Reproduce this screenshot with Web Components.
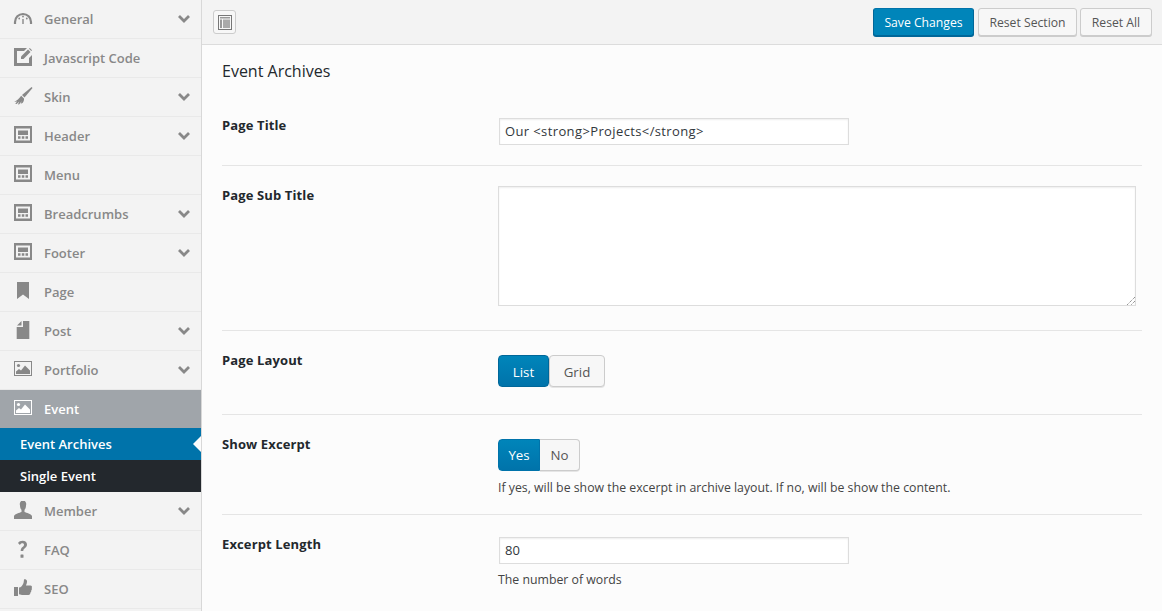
<!DOCTYPE html>
<html>
<head>
<meta charset="utf-8">
<title>Theme Options</title>
<style>
html, body { margin: 0; padding: 0; height: 100%; overflow: hidden; }
body { font-family: "Open Sans", sans-serif; font-size: 13px; color: #32373c; background: #fcfcfc; }
</style>
</head>
<body>
<options-panel>
  <side-menu slot="side">
    <menu-item icon="gauge" arrow>General</menu-item>
    <menu-item icon="edit">Javascript Code</menu-item>
    <menu-item icon="brush" arrow>Skin</menu-item>
    <menu-item icon="layout" arrow>Header</menu-item>
    <menu-item icon="layout">Menu</menu-item>
    <menu-item icon="layout" arrow>Breadcrumbs</menu-item>
    <menu-item icon="layout" arrow>Footer</menu-item>
    <menu-item icon="bookmark">Page</menu-item>
    <menu-item icon="post" arrow>Post</menu-item>
    <menu-item icon="image" arrow>Portfolio</menu-item>
    <menu-item icon="image" open>Event</menu-item>
    <sub-item active>Event Archives</sub-item>
    <sub-item>Single Event</sub-item>
    <menu-item icon="user" arrow>Member</menu-item>
    <menu-item icon="help">FAQ</menu-item>
    <menu-item icon="thumb">SEO</menu-item>
  </side-menu>
  <top-bar slot="top"></top-bar>
  <h2 slot="title" style="margin:0;font-size:16px;font-weight:400;line-height:22px;color:#23282d">Event Archives</h2>
  <option-row label="Page Title" top="22" bottom="20">
    <input-box value="Our &lt;strong&gt;Projects&lt;/strong&gt;" spaced></input-box>
  </option-row>
  <option-row label="Page Sub Title" top="20" bottom="24">
    <text-box></text-box>
  </option-row>
  <option-row label="Page Layout" top="24" bottom="27">
    <btn-set first="List" second="Grid"></btn-set>
  </option-row>
  <option-row label="Show Excerpt" top="24" bottom="17" desc="If yes, will be show the excerpt in archive layout. If no, will be show the content.">
    <btn-set first="Yes" second="No" joined></btn-set>
  </option-row>
  <option-row label="Excerpt Length" top="22" bottom="18" desc="The number of words" last>
    <input-box value="80"></input-box>
  </option-row>
</options-panel>

<script>
const ICONS = {
  gauge: '<path d="M2 15v-2a8 8 0 0 1 16 0v2" fill="none" stroke="currentColor" stroke-width="2.200"/><circle cx="10" cy="7.500" r=".9"/><circle cx="6.200" cy="9.500" r=".9"/><circle cx="13.800" cy="9.500" r=".9"/><rect x="9.300" y="10" width="1.400" height="5"/>',
  edit: '<path d="M1 0h13l-3 3H4v12h12v-5l3-3v11H1z"/><path d="M8 8.500 15 1.500 17.500 4 10.500 11H8z"/><path d="M16 .7 16.800 0 19 2.200 18.300 3z"/>',
  brush: '<path d="M18.600 0 19.500 .9 11.500 10.500 9 8z"/><path d="M8.200 8.700 11 11.500c.2 1.800-.3 3-1.500 4.500l-1.800.8.900-2.600-2.300 3.100-1.400.2 1.300-2.900-2.500 2.500-1.500-.3 2-2.400-3 .6C4 13.500 6 11.500 8.200 8.700z"/>',
  layout: '<path fill-rule="evenodd" d="M1 0h18v17H1zM3 2.500v12h14v-12z"/><path d="M5 4.500h10v4.500H5z"/><path d="M5 10.300h2.500v2.500H5zM8.800 10.300h2.500v2.500H8.800zM12.500 10.300H15v2.500h-2.500z"/>',
  bookmark: '<path d="M4 0h12v17l-6-4.500L4 17z"/>',
  post: '<path d="M10 0h6.300v18H3.700V6H10z"/><path d="M8.500 0v4.500H4z"/>',
  image: '<path fill-rule="evenodd" d="M1 1h18v15H1zM2 2v13h16V2z"/><circle cx="5.500" cy="5.500" r="1.600"/><path d="M3 14v-2.500l3-2.500 2 1.500 4-5 5 5V14z"/>',
  user: '<path d="M7 4.500a3.200 3.800 0 1 1 6 0c0 2-.8 3.500-1.500 4.500v2c2 1 6.500 1.800 7.500 4v3H1v-3c1-2.200 5.500-3 7.500-4V9C7.800 8 7 6.500 7 4.500z"/>',
  help: '<path d="M5 3C6 1.500 7.500.7 9.500.7c2.800 0 4.500 1.600 4.500 3.800 0 1.900-1 2.800-2.200 3.700-1.200.9-1.500 1.500-1.500 2.800H7.700c0-2 .5-3 1.800-4 1-.8 1.500-1.300 1.500-2.200 0-.9-.6-1.500-1.600-1.500-1.100 0-1.800.6-2.500 1.800z"/><rect x="7.500" y="14.500" width="3" height="3.200" rx=".5"/>',
  thumb: '<path d="M1 8h4v9H1z"/><path d="M6 8.500c2 0 3.500-2 4.500-4.500.4-1.200.3-2.500.5-3.500.2-.7 2.800-.5 3 1.500.2 1.600-.6 3.300-1 4.500h4.500c1.500 0 1.700 1.600 1.200 2.500.4 1 .2 1.800-.5 2.400.2 1-.1 1.700-.8 2.200.1 1.200-.6 2.400-1.900 2.400H10c-1.500 0-2.500-.8-4-.8z"/>'
};

const chevron = '<svg width="12" height="8" viewBox="0 0 12 8"><path d="M1 1 6 6l5-5" fill="none" stroke="currentColor" stroke-width="2.800"/></svg>';

class MenuItem extends HTMLElement {
  constructor() {
    super();
    const open = this.hasAttribute('open');
    const arrow = this.hasAttribute('arrow') ? chevron : '';
    this.attachShadow({ mode: 'open' });
    this.shadowRoot.innerHTML = `
    <style>
      :host { display: flex; align-items: center; box-sizing: border-box; height: ${open ? 38 : 39}px; padding: 0 11px 0 13px;
        border-bottom: ${open ? 0 : 1}px solid #e9e9e9; background: ${open ? '#a0a5aa' : '#f3f3f3'};
        color: ${open ? '#fff' : '#888'}; font-weight: 600; font-size: 13px; }
      svg.ic { width: 20px; height: 20px; fill: currentColor; flex: none; margin-right: 11px; }
      .label { flex: 1; }
    </style>
    <svg class="ic" viewBox="0 0 20 20">${ICONS[this.getAttribute('icon')]}</svg>
    <span class="label"><slot></slot></span>${arrow}`;
  }
}
customElements.define('menu-item', MenuItem);

class SubItem extends HTMLElement {
  constructor() {
    super();
    const active = this.hasAttribute('active');
    this.attachShadow({ mode: 'open' });
    this.shadowRoot.innerHTML = `
    <style>
      :host { display: flex; align-items: center; position: relative; height: 32px; padding-left: 20px;
        background: ${active ? '#0073aa' : '#23282d'}; color: #fff; font-weight: 600; font-size: 13px; }
      .notch { position: absolute; right: 0; top: 8px; border: 8px solid transparent; border-right-color: #fcfcfc; border-left-width: 0; }
    </style>
    <slot></slot>${active ? '<span class="notch"></span>' : ''}`;
  }
}
customElements.define('sub-item', SubItem);

class SideMenu extends HTMLElement {
  constructor() {
    super();
    this.attachShadow({ mode: 'open' });
    this.shadowRoot.innerHTML = `
    <style>
      :host { display: block; width: 201px; height: 100%; background: #f3f3f3; }
    </style>
    <slot></slot>`;
  }
}
customElements.define('side-menu', SideMenu);

class TopBar extends HTMLElement {
  constructor() {
    super();
    this.attachShadow({ mode: 'open' });
    this.shadowRoot.innerHTML = `
    <style>
      :host { display: flex; align-items: center; box-sizing: border-box; height: 45px; padding: 0 10px 0 11px; gap: 3px;
        background: #f3f3f3; border-bottom: 1px solid #dcdcdc; }
      .toggle { box-sizing: border-box; width: 23px; height: 24px; border: 1px solid #ccc; border-radius: 3px; background: #f7f7f7;
        display: flex; align-items: center; justify-content: center; margin-right: auto; }
      button { box-sizing: border-box; height: 28px; padding: 1px 0 0; font: 12.2px/26px "Open Sans", sans-serif; border-radius: 3px;
        border: 1px solid #ccc; background: #f7f7f7; color: #555; box-shadow: 0 1px 0 #ccc; }
      .primary { background: #0085ba; border-color: #0073aa #006799 #006799; color: #fff; box-shadow: 0 1px 0 #006799; width: 101px; margin-right: 1px; }
    </style>
    <span class="toggle"><svg width="14" height="15" viewBox="0 0 14 15"><path fill="#777" fill-rule="evenodd" d="M0 0h14v15H0zM1 1v13h12V1z"/><path fill="#999" d="M2 2h10v1.500H2zM2 4.500h2V13H2z"/><path fill="#aaa" d="M5 4.500h7V13H5z"/></svg></span>
    <button class="primary">Save Changes</button>
    <button style="width:99px">Reset Section</button>
    <button style="width:72px">Reset All</button>`;
  }
}
customElements.define('top-bar', TopBar);

class OptionRow extends HTMLElement {
  constructor() {
    super();
    const desc = this.getAttribute('desc');
    const last = this.hasAttribute('last');
    this.attachShadow({ mode: 'open' });
    this.shadowRoot.innerHTML = `
    <style>
      :host { display: flex; padding-bottom: ${this.getAttribute('bottom')}px; border-bottom: ${last ? 0 : 1}px solid #e5e5e5; }
      .label { width: 276px; flex: none; padding-top: 20px; font-weight: 700; font-size: 13px; line-height: 18px; letter-spacing: .12px; color: #23282d; }
      .control { flex: 1; padding-top: ${this.getAttribute('top')}px; }
      .desc { font-size: 12.3px; line-height: 18px; color: #444; margin-top: 7px; }
    </style>
    <div class="label">${this.getAttribute('label')}</div>
    <div class="control"><slot></slot>${desc ? `<div class="desc">${desc}</div>` : ''}</div>`;
  }
}
customElements.define('option-row', OptionRow);

class InputBox extends HTMLElement {
  constructor() {
    super();
    this.attachShadow({ mode: 'open' });
    this.shadowRoot.innerHTML = `
    <style>
      :host { display: block; }
      div { box-sizing: border-box; width: 350px; height: 27px; margin-left: 1px; padding: 0 5px; border: 1px solid #ddd; background: #fff;
        box-shadow: inset 0 1px 2px rgba(0,0,0,.07); font-size: 13px; line-height: 25px; color: #32373c;
        letter-spacing: ${this.hasAttribute('spaced') ? '.38px' : '0'}; }
    </style>
    <div></div>`;
    this.shadowRoot.querySelector('div').textContent = this.getAttribute('value');
  }
}
customElements.define('input-box', InputBox);

class TextBox extends HTMLElement {
  constructor() {
    super();
    this.attachShadow({ mode: 'open' });
    this.shadowRoot.innerHTML = `
    <style>
      :host { display: block; }
      .area { position: relative; box-sizing: border-box; width: 638px; height: 120px; border: 1px solid #ddd; background: #fff;
        box-shadow: inset 0 1px 2px rgba(0,0,0,.07); }
      svg { position: absolute; right: 0; bottom: 0; }
    </style>
    <div class="area"><svg width="9" height="9" viewBox="0 0 9 9"><path d="M9 1 1 9M9 5 5 9" stroke="#666" stroke-dasharray="1 1" fill="none"/></svg></div>`;
  }
}
customElements.define('text-box', TextBox);

class BtnSet extends HTMLElement {
  constructor() {
    super();
    const joined = this.hasAttribute('joined');
    this.attachShadow({ mode: 'open' });
    this.shadowRoot.innerHTML = `
    <style>
      :host { display: flex; height: 32px; padding-bottom: ${joined ? 1 : 0}px; }
      span { box-sizing: border-box; height: 32px; display: flex; align-items: center; justify-content: center; font-size: 13.3px; padding-top: ${joined ? 0 : 1}px; }
      .on { width: ${joined ? 42 : 51}px; background: linear-gradient(#0085ba, #0073aa); color: #fff;
        border: 1px solid ${joined ? '#0073aa' : '#006799'}; border-radius: ${joined ? '4px 0 0 4px' : '4px'}; }
      .off { width: ${joined ? 40 : 56}px; background: #f7f7f7; color: #555; border: 1px solid #ccc; ${joined ? 'border-left:0;' : ''}
        border-radius: ${joined ? '0 4px 4px 0' : '4px'}; box-shadow: 0 1px 0 #e5e5e5; }
    </style>
    <span class="on">${this.getAttribute('first')}</span><span class="off">${this.getAttribute('second')}</span>`;
  }
}
customElements.define('btn-set', BtnSet);

class OptionsPanel extends HTMLElement {
  constructor() {
    super();
    this.attachShadow({ mode: 'open' });
    this.shadowRoot.innerHTML = `
    <style>
      :host { display: flex; height: 611px; }
      .side { width: 201px; flex: none; border-right: 1px solid #d8d8d8; height: 611px; background: #f3f3f3; }
      .main { flex: 1; min-width: 0; }
      .body { padding: 15px 20px 0 20px; }
      .title { margin-bottom: 14px; }
    </style>
    <div class="side"><slot name="side"></slot></div>
    <div class="main">
      <slot name="top"></slot>
      <div class="body">
        <div class="title"><slot name="title"></slot></div>
        <slot></slot>
      </div>
    </div>`;
  }
}
customElements.define('options-panel', OptionsPanel);
</script>
</body>
</html>
